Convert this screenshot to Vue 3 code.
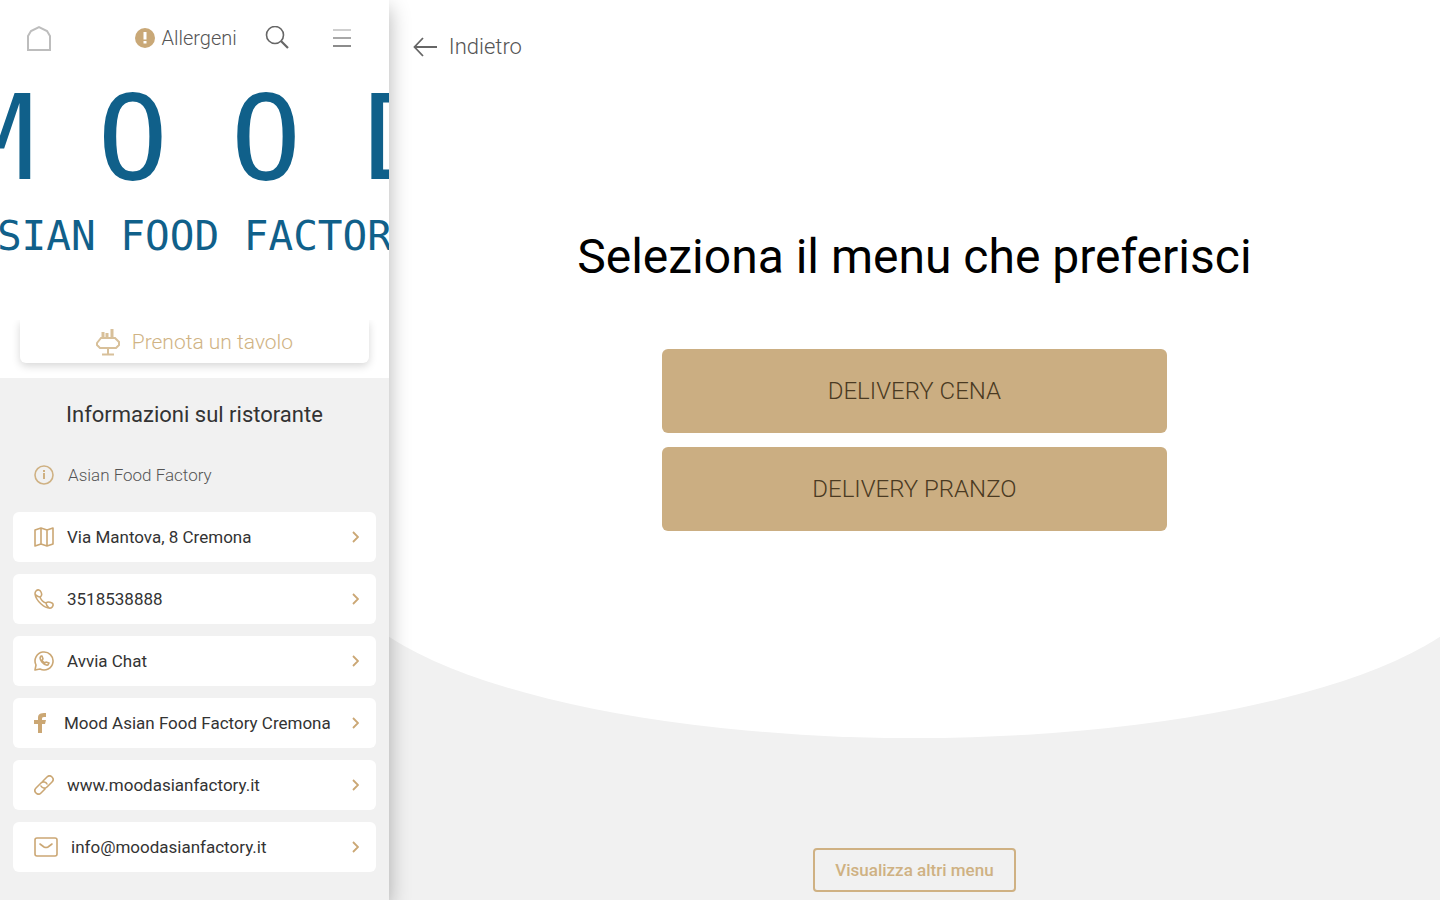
<template>
  <div class="page">
    <aside class="sidebar">
      <header class="topbar">
        <a href="#" class="home" aria-label="Home">
          <svg width="26" height="26" viewBox="0 0 26 26" fill="none" stroke="#bdbdbd" stroke-width="2">
            <path d="M2 25V11L5 6L13 2L21 6L24 11V25Z" />
          </svg>
        </a>
        <nav class="tools">
          <a href="#" class="allergens">
            <svg width="20" height="20" viewBox="0 0 20 20">
              <circle cx="10" cy="10" r="10" fill="#c9a877" />
              <path d="M10 4V11.500M10 13V15.500" stroke="#fff" stroke-width="3" />
            </svg>
            <span>Allergeni</span>
          </a>
          <button type="button" class="icon-btn" aria-label="Cerca">
            <svg width="24" height="24" viewBox="0 0 24 24" fill="none" stroke="#666" stroke-width="1.600">
              <circle cx="10" cy="9" r="8.500" />
              <path d="M16 15L23 22" stroke-width="2.200" />
            </svg>
          </button>
          <button type="button" class="icon-btn" aria-label="Menu">
            <svg width="18" height="20" viewBox="0 0 18 20" fill="none" stroke-width="2">
              <path d="M0 2H18" stroke="#cfcfcf" />
              <path d="M0 10H18" stroke="#a8a8a8" />
              <path d="M0 18H18" stroke="#8c8c8c" />
            </svg>
          </button>
        </nav>
      </header>

      <div class="cover">
        <div class="brand">
          <span v-for="(letter, i) in brand" :key="i">{{ letter }}</span>
        </div>
        <div class="tagline">ASIAN FOOD FACTORY</div>
      </div>

      <div class="booking">
        <button type="button" class="booking-btn">
          <svg width="24" height="28" viewBox="0 0 24 28" fill="none" stroke="#d8c09a" stroke-width="2">
            <path d="M5 10H19L23 14V17L20 20H4L1 17V15Z" />
            <path d="M12 20V26M6 26.500H18" />
            <path d="M7 9V4M11 9V5M16 9V1" stroke-width="3" />
          </svg>
          <span>Prenota un tavolo</span>
        </button>
      </div>

      <section class="info">
        <h2>Informazioni sul ristorante</h2>
        <div class="place">
          <svg width="20" height="20" viewBox="0 0 20 20" fill="none" stroke="#cfb183" stroke-width="1.600">
            <circle cx="10" cy="10" r="9" />
            <path d="M10 5V7M10 8V14" stroke-width="2" />
          </svg>
          <span>Asian Food Factory</span>
        </div>
        <ul class="contacts">
          <li v-for="item in contacts" :key="item.label">
            <a :href="item.href" class="contact">
              <svg
                :width="item.width"
                height="20"
                :viewBox="`0 0 ${item.width} 20`"
                :fill="item.filled ? '#cba774' : 'none'"
                :stroke="item.filled ? 'none' : '#cba774'"
                stroke-width="1.600"
                stroke-linejoin="round"
                stroke-linecap="round"
              >
                <path :d="item.icon" />
              </svg>
              <span class="contact-label" :class="{ tight: item.filled }">{{ item.label }}</span>
              <svg class="chevron" width="7" height="12" viewBox="0 0 7 12" fill="none" stroke="#cba774" stroke-width="1.800">
                <path d="M1 1L6 6L1 11" />
              </svg>
            </a>
          </li>
        </ul>
      </section>
    </aside>

    <main class="content">
      <div class="curve"></div>
      <a href="#" class="back">
        <svg width="24" height="20" viewBox="0 0 24 20" fill="none" stroke="#666" stroke-width="1.800">
          <path d="M24 10H2M10 1L1.500 10L10 19" />
        </svg>
        <span>Indietro</span>
      </a>
      <h1>Seleziona il menu che preferisci</h1>
      <div class="choices">
        <button v-for="menu in menus" :key="menu" type="button" class="choice">{{ menu }}</button>
      </div>
      <button type="button" class="other">Visualizza altri menu</button>
    </main>
  </div>
</template>

<script setup>
const brand = ['M', 'O', 'O', 'D'];

const menus = ['DELIVERY CENA', 'DELIVERY PRANZO'];

const contacts = [
  {
    label: 'Via Mantova, 8 Cremona',
    href: '#',
    width: 20,
    icon: 'M1 3L7 1L13 3L19 1V17L13 19L7 17L1 19ZM7 1V17M13 3V19'
  },
  {
    label: '3518538888',
    href: 'tel:3518538888',
    width: 20,
    icon: 'M2 2C4 0 6 1 7 3C8 5 8 7 6 8C7 11 9 13 12 14C14 12 16 13 18 14C20 15 19 18 17 19C11 20 2 12 1 5C1 4 1 3 2 2ZM6 8C4 8 3 7 2 6M12 14C12 16 13 17 15 19'
  },
  {
    label: 'Avvia Chat',
    href: '#',
    width: 20,
    icon: 'M1 19L2 14A9 9 0 1 1 6 18ZM7 5C4 8 10 15 14 14L15 12L12 11L11 12C9 11 8 10 8 9L9 8L8 5Z'
  },
  {
    label: 'Mood Asian Food Factory Cremona',
    href: '#',
    width: 12,
    filled: true,
    icon: 'M4 20V11H0V7H4V5C4 1 6 0 12 0V4C9 4 8 4 8 6V7H12L11 11H8V20Z'
  },
  {
    label: 'www.moodasianfactory.it',
    href: '#',
    width: 20,
    icon: 'M9 6L13 2C15 0 17 1 18 2C20 4 19 6 18 7L13 12C11 14 8 13 7 11M11 14L7 18C5 20 3 19 2 18C0 16 1 14 2 13L7 8C9 6 12 7 13 9'
  },
  {
    label: 'info@moodasianfactory.it',
    href: 'mailto:info@moodasianfactory.it',
    width: 24,
    icon: 'M3 1H21Q23 1 23 3V17Q23 19 21 19H3Q1 19 1 17V3Q1 1 3 1ZM6 7L10 10Q12 11 14 10L18 7'
  }
];
</script>

<style>
body {
  margin: 0;
}
</style>

<style scoped>
.page {
  display: flex;
  min-height: 100vh;
  font-family: Roboto, "Noto Sans", sans-serif;
  color: #333;
  background: #f1f1f1;
}

a {
  color: inherit;
  text-decoration: none;
}

button {
  font-family: inherit;
  cursor: pointer;
}

svg {
  display: block;
  flex-shrink: 0;
}

.sidebar {
  position: relative;
  z-index: 1;
  width: 27%;
  flex-shrink: 0;
  background: #f1f1f1;
  box-shadow: 0 8px 20px rgba(0, 0, 0, 0.3);
}

.topbar {
  display: flex;
  align-items: center;
  justify-content: space-between;
  height: 60px;
  padding: 8px 38px 0 26px;
  background: #fff;
}

.tools {
  display: flex;
  align-items: center;
}

.allergens {
  display: flex;
  align-items: center;
  gap: 6px;
  margin-right: 28px;
  color: #555;
  font-size: 20px;
  font-weight: 300;
}

.icon-btn {
  padding: 0;
  border: none;
  background: none;
}

.icon-btn + .icon-btn {
  margin-left: 44px;
}

.cover {
  display: flex;
  flex-direction: column;
  align-items: center;
  height: 252px;
  overflow: hidden;
  background: #fff;
  color: #10608a;
  font-family: "DejaVu Sans Mono", monospace;
}

.brand {
  display: flex;
  gap: 62px;
  padding-left: 10px;
  font-size: 118px;
  line-height: 140px;
}

.tagline {
  font-size: 41px;
  line-height: 56px;
  white-space: nowrap;
}

.booking {
  padding: 0 20px 15px;
  overflow: hidden;
  background: #fff;
}

.booking-btn {
  display: flex;
  align-items: center;
  justify-content: center;
  gap: 12px;
  width: 100%;
  height: 43px;
  padding: 0;
  border: none;
  border-radius: 0 0 6px 6px;
  background: #fff;
  box-shadow: 0 3px 8px rgba(0, 0, 0, 0.16);
  color: #d0b384;
  font-size: 21px;
  font-weight: 300;
}

.info {
  padding: 22px 13px;
}

.info h2 {
  margin: 0;
  font-size: 22px;
  font-weight: 400;
  line-height: 30px;
  text-align: center;
}

.place {
  display: flex;
  align-items: center;
  gap: 14px;
  height: 50px;
  margin: 20px 0 12px;
  padding: 0 21px;
  color: #555;
  font-size: 17px;
  font-weight: 300;
}

.contacts {
  display: flex;
  flex-direction: column;
  gap: 12px;
  margin: 0;
  padding: 0;
  list-style: none;
}

.contact {
  display: flex;
  align-items: center;
  height: 50px;
  padding: 0 17px 0 21px;
  border-radius: 6px;
  background: #fff;
  font-size: 17px;
}

.contact-label {
  flex: 1;
  margin-left: 13px;
  white-space: nowrap;
}

.contact-label.tight {
  margin-left: 18px;
}

.content {
  position: relative;
  display: flex;
  flex: 1;
  flex-direction: column;
  align-items: center;
  overflow: hidden;
}

.content > * {
  position: relative;
}

/* White area with the rounded lower edge */
.content > .curve {
  position: absolute;
  top: 0;
  left: -5%;
  width: 110%;
  height: 82vh;
  border-radius: 0 0 50% 50% / 0 0 174px 174px;
  background: #fff;
}

.back {
  display: flex;
  align-items: center;
  align-self: flex-start;
  gap: 12px;
  margin: 32px 0 0 24px;
  color: #555;
  font-size: 22px;
  font-weight: 300;
  line-height: 30px;
}

h1 {
  margin: 161px 0 0;
  color: #000;
  font-size: 48px;
  font-weight: 400;
  line-height: 68px;
}

.choices {
  display: flex;
  flex-direction: column;
  gap: 14px;
  width: 48%;
  margin: 58px 0;
}

.choice {
  height: 84px;
  border: none;
  border-radius: 6px;
  background: #cbae82;
  color: #4a3a22;
  font-size: 24px;
  font-weight: 300;
}

.other {
  height: 44px;
  margin: auto 0 8px;
  padding: 0 20px;
  border: 2px solid #cfb183;
  border-radius: 4px;
  background: transparent;
  color: #cfb183;
  font-size: 17px;
  font-weight: 500;
}
</style>
